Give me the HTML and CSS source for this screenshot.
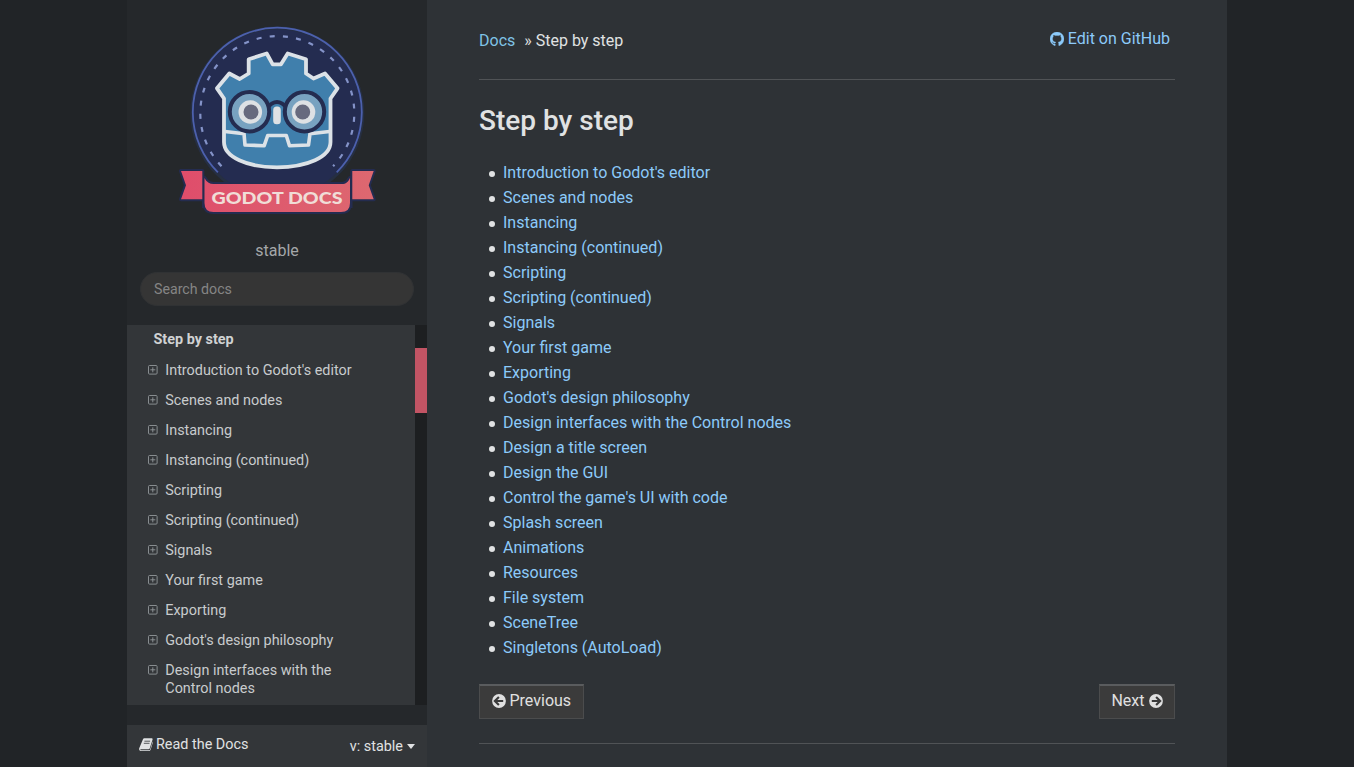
FILE: index.html
```html
<!DOCTYPE html>
<html lang="en">
<head>
<meta charset="utf-8">
<title>Step by step — Godot Docs</title>
<link rel="stylesheet" href="styles.css">
</head>
<body>
<svg class="sprites" aria-hidden="true">
  <symbol id="expand" viewBox="0 0 10 10"><rect x=".5" y=".5" width="8.600" height="8.600" rx="1" fill="none" stroke="currentColor" stroke-width=".9"/><path d="M4.800 2.300v5M2.300 4.800h5" stroke="currentColor" stroke-width=".9"/></symbol>
  <symbol id="github" viewBox="0 0 1536 1536"><path fill="currentColor" stroke="currentColor" stroke-width="40" d="M768 0q209 0 385.500 103t279.500 279.500 103 385.500q0 251-146.500 451.500t-378.500 277.500q-27 5-40-7t-13-30q0-3 .5-76.500t.5-134.500q0-97-52-142 57-6 102.500-18t94-39 81-66.500 53-105 20.500-150.500q0-119-79-206 37-91-8-204-28-9-81 11t-92 44l-38 24q-93-26-192-26t-192 26q-16-11-42.500-27t-83.500-38.500-85-13.500q-45 113-8 204-79 87-79 206 0 85 20.500 150t52.500 105 80.500 67 94 39 102.500 18q-39 36-49 103-21 10-45 15t-57 5-65.500-21.500-55.500-62.500q-19-32-48.500-52t-49.500-24l-20-3q-21 0-29 4.500t-5 11.500 9 14 13 12l7 5q22 10 43.500 38t31.500 51l10 23q13 38 44 61.500t67 30 69.500 7 55.500-3.500l23-4q0 38 .5 88.500t.5 54.500q0 18-13 30t-40 7q-232-77-378.500-277.500t-146.500-451.500q0-209 103-385.500t279.500-279.500 385.500-103z"/></symbol>
  <symbol id="arrow" viewBox="0 0 14 14"><circle cx="7" cy="7" r="6.900" fill="currentColor"/><path d="M2.800 7h8M7.100 2.900 11.200 7l-4.100 4.100" fill="none" stroke="#3a3a3a" stroke-width="2.100"/></symbol>
  <symbol id="book" viewBox="0 0 14 13"><path fill="currentColor" d="M4.200.8Q4.500.2 5.300.2h7.200c1 0 1.300.7 1 1.500l-2.700 8.600c-.2.700-.7 1-1.400 1H1.800c-.5 0-.7.5-.3.8l.8.200h7.500c.7 0 1.200-.4 1.400-1l2.500-7.900c.3.300.3.800.1 1.300l-2.200 7c-.3.800-.9 1.200-1.700 1.200H1.900C.7 12.900-.2 11.600.2 10.300z"/><path d="M5.400 3.200h5.700M4.800 5.300h5.700" stroke="#33373a" stroke-width=".8"/></symbol>
</svg>
<div class="page">
  <nav class="sidebar">
    <header class="brand">
      <svg class="logo" viewBox="170 15 215 205" role="img" aria-label="Godot Docs">
        <circle class="glow" cx="277.300" cy="113.300" r="87"/>
        <g class="ribbon-edge">
          <path d="M181 171h21.300v28.300H181l5-14.100zM352.300 171h21.400l-5 14.200 5 14.100h-21.400z"/>
          <path d="M204.500 178c2 4 5 6 9 6H342c4 0 6-2 8-6v25q0 9-9 9H213.500q-9 0-9-9z"/>
        </g>
        <circle class="medal" cx="277.300" cy="113.300" r="84"/>
        <path class="rim" d="M217.900 172.300A84.500 84.500 0 1 1 336.700 172.300"/>
        <path class="stitch" d="M221.500 166.200A77 77 0 1 1 333.100 166.200"/>
        <path class="head" d="M266.700 53.500 272.700 64.300H281L287.700 53.500 306 59.300V73.500L313.500 78.500 325 73.500 337.500 88.300 330.500 98.500V142C330.500 157 307 167.300 277 167.300S224 157 224 142V98.500L217 88.300 229.300 73.500 239.700 79 248.700 73.500V59.300Z"/>
        <path class="mouth" d="M225 131.500 244 133.700 245 145 264.200 145.700 267.700 135.500H286.300L289.500 145.700 308.500 145 310 133.700 329.500 131.500"/>
        <path class="bridge" d="M267 108q10-12 20 0"/>
        <g><circle class="frame" cx="249.500" cy="111.700" r="19.700"/><circle class="white" cx="250.300" cy="112" r="11.800"/><circle class="pupil" cx="251" cy="112" r="7.500"/></g>
        <g><circle class="frame" cx="304.500" cy="111.700" r="19.700"/><circle class="white" cx="303.500" cy="112" r="11.800"/><circle class="pupil" cx="302.700" cy="112" r="7.500"/></g>
        <rect class="white" x="273.200" y="106.500" width="7.600" height="17.800" rx="3.500"/>
        <defs><linearGradient id="pink" gradientUnits="userSpaceOnUse" x1="181" y1="0" x2="374" y2="0"><stop offset="0" stop-color="#df4d6b"/><stop offset="1" stop-color="#dd6870"/></linearGradient></defs>
        <path class="gap" d="M203 176v32M351.500 176v32"/>
        <g fill="url(#pink)">
          <path d="M181 171h21.300v28.300H181l5-14.100z"/><path d="M352.300 171h21.400l-5 14.200 5 14.100h-21.400z"/>
          <path d="M204.500 178c2 4 5 6 9 6H342c4 0 6-2 8-6v25q0 9-9 9H213.500q-9 0-9-9z"/>
        </g>
        <text class="wordmark" x="211.500" y="204" textLength="131" lengthAdjust="spacingAndGlyphs">GODOT DOCS</text>
      </svg>
      <div class="version">stable</div>
      <input class="search" type="text" placeholder="Search docs">
    </header>
    <div class="menu">
      <div class="menu-body">
        <p class="menu-title">Step by step</p>
        <ul class="tree">
          <li><svg><use href="#expand"/></svg><a>Introduction to Godot's editor</a></li>
          <li><svg><use href="#expand"/></svg><a>Scenes and nodes</a></li>
          <li><svg><use href="#expand"/></svg><a>Instancing</a></li>
          <li><svg><use href="#expand"/></svg><a>Instancing (continued)</a></li>
          <li><svg><use href="#expand"/></svg><a>Scripting</a></li>
          <li><svg><use href="#expand"/></svg><a>Scripting (continued)</a></li>
          <li><svg><use href="#expand"/></svg><a>Signals</a></li>
          <li><svg><use href="#expand"/></svg><a>Your first game</a></li>
          <li><svg><use href="#expand"/></svg><a>Exporting</a></li>
          <li><svg><use href="#expand"/></svg><a>Godot's design philosophy</a></li>
          <li><svg><use href="#expand"/></svg><a>Design interfaces with the Control nodes</a></li>
        </ul>
      </div>
      <div class="track"><div class="thumb"></div></div>
    </div>
    <footer class="versions">
      <span class="rtd"><svg><use href="#book"/></svg>Read the Docs</span>
      <span class="current">v: stable<i class="caret"></i></span>
    </footer>
  </nav>
  <main class="content">
    <div class="topbar">
      <div class="crumbs"><a>Docs</a><span>» Step by step</span></div>
      <a class="edit"><svg><use href="#github"/></svg>Edit on GitHub</a>
    </div>
    <h1>Step by step</h1>
    <ul class="toc">
      <li><a>Introduction to Godot's editor</a></li>
      <li><a>Scenes and nodes</a></li>
      <li><a>Instancing</a></li>
      <li><a>Instancing (continued)</a></li>
      <li><a>Scripting</a></li>
      <li><a>Scripting (continued)</a></li>
      <li><a>Signals</a></li>
      <li><a>Your first game</a></li>
      <li><a>Exporting</a></li>
      <li><a>Godot's design philosophy</a></li>
      <li><a>Design interfaces with the Control nodes</a></li>
      <li><a>Design a title screen</a></li>
      <li><a>Design the GUI</a></li>
      <li><a>Control the game's UI with code</a></li>
      <li><a>Splash screen</a></li>
      <li><a>Animations</a></li>
      <li><a>Resources</a></li>
      <li><a>File system</a></li>
      <li><a>SceneTree</a></li>
      <li><a>Singletons (AutoLoad)</a></li>
    </ul>
    <div class="pager">
      <a class="btn"><svg class="back"><use href="#arrow"/></svg>Previous</a>
      <a class="btn">Next<svg><use href="#arrow"/></svg></a>
    </div>
  </main>
</div>
</body>
</html>
```
FILE: styles.css
```css
* { box-sizing: border-box; }
body { margin: 0; background: #212427; color: #e0e2e3; font: 16px/24px Roboto, "Liberation Sans", sans-serif; overflow: hidden; }
ul { margin: 0; padding: 0; }
svg { flex: none; }
.sprites { display: none; }
.page { display: flex; width: 1100px; height: 767px; margin: 0 auto; }

.sidebar { display: flex; flex-direction: column; width: 300px; background: #25282b; }
.brand { display: flex; flex-direction: column; align-items: center; height: 325px; padding-top: 15px; }
.logo { width: 215px; height: 205px; margin-left: 1px; }
.version { margin-top: 19px; line-height: 24px; color: #a4a7a9; }
.search { width: 274px; height: 34px; margin-top: 9px; padding: 0 13px; border: 1px solid #303234; border-radius: 17px; background: #353535; color: #999; font: 14.200px Roboto, sans-serif; }
.search::placeholder { color: #858585; }
.menu { display: flex; height: 380px; }
.menu-body { width: 288px; background: #333639; overflow: hidden; font-size: 14.400px; line-height: 18px; color: #c8cbcd; }
.menu-title { margin: 0; padding: 6px 26.500px 7px; font-weight: 700; color: #d0d2d3; }
.tree { list-style: none; }
.tree li { display: flex; padding: 6px 60px 6px 21px; }
.tree svg { width: 10px; height: 10px; margin: 3px 7.300px 0 0; color: #92979a; }
.track { width: 12px; padding-top: 23px; background: #1d1f21; }
.thumb { height: 65px; background: #c25464; }
.versions { display: flex; justify-content: space-between; height: 42px; margin-top: 20px; padding: 0 12px; background: #333639; font-size: 14.400px; color: #e0e2e3; }
.rtd { display: flex; align-items: center; height: 39px; }
.rtd svg { width: 14px; height: 13px; margin-right: 3px; }
.current { display: flex; align-items: center; height: 43px; }
.caret { margin-left: 4px; border: 4.500px solid transparent; border-top: 5px solid #e0e2e3; border-bottom: 0; }

.content { width: 800px; padding: 27px 52px 0; background: #2e3236; }
a { color: inherit; }
.content a { color: #8ccafa; }
.topbar { display: flex; justify-content: space-between; height: 53px; border-bottom: 1px solid #505356; }
.crumbs { padding-top: 2px; }
.content .crumbs a { margin-right: 9px; color: #7fc3e6; }
.edit { display: flex; height: 24px; padding-right: 5px; }
.edit svg { width: 14px; height: 14px; margin: 5px 4px 0 0; }
h1 { margin: 24px 0 23px; font-size: 28px; line-height: 33px; font-weight: 500; }
.toc { padding-left: 10px; line-height: 25px; list-style: none; }
.toc li { display: flex; align-items: center; gap: 8px; }
.toc li::before { content: ""; width: 6px; height: 6px; margin-top: 2px; border-radius: 50%; background: #e0e2e3; }
.pager { display: flex; justify-content: space-between; height: 84px; padding-top: 24px; border-bottom: 1px solid #505356; }
.content .btn { display: flex; align-items: center; gap: 4px; height: 35px; padding: 0 11.500px 3px; border: 1px solid #4b4c4d; border-top: 2px solid #5a5c5e; background: #3b3b3b; color: #e0e0e0; }
.btn svg { width: 14px; height: 14px; }
.btn .back { transform: scaleX(-1); }

.glow { fill: #26324e; opacity: .65; }
.medal { fill: #242c50; }
.rim { fill: none; stroke: #4c60ad; stroke-width: 1.800; }
.stitch { fill: none; stroke: #8493c8; stroke-width: 2.200; stroke-dasharray: 5 8.200; }
.ribbon-edge path { fill: #242c50; stroke: #242c50; stroke-width: 4; stroke-linejoin: round; }
.head { fill: #407fac; stroke: #dce2e7; stroke-width: 3.800; stroke-linejoin: round; }
.mouth { fill: none; stroke: #dce2e7; stroke-width: 3.600; stroke-linejoin: round; }
.bridge { fill: none; stroke: #242c50; stroke-width: 4; }
.frame { fill: #78a2c0; stroke: #242c50; stroke-width: 4; }
.white { fill: #dee1e4; }
.pupil { fill: #676a7e; }
.gap { stroke: #242c50; stroke-width: 2; }
.wordmark { fill: #f0ddd7; font: 900 17px Lato, sans-serif; }
```
